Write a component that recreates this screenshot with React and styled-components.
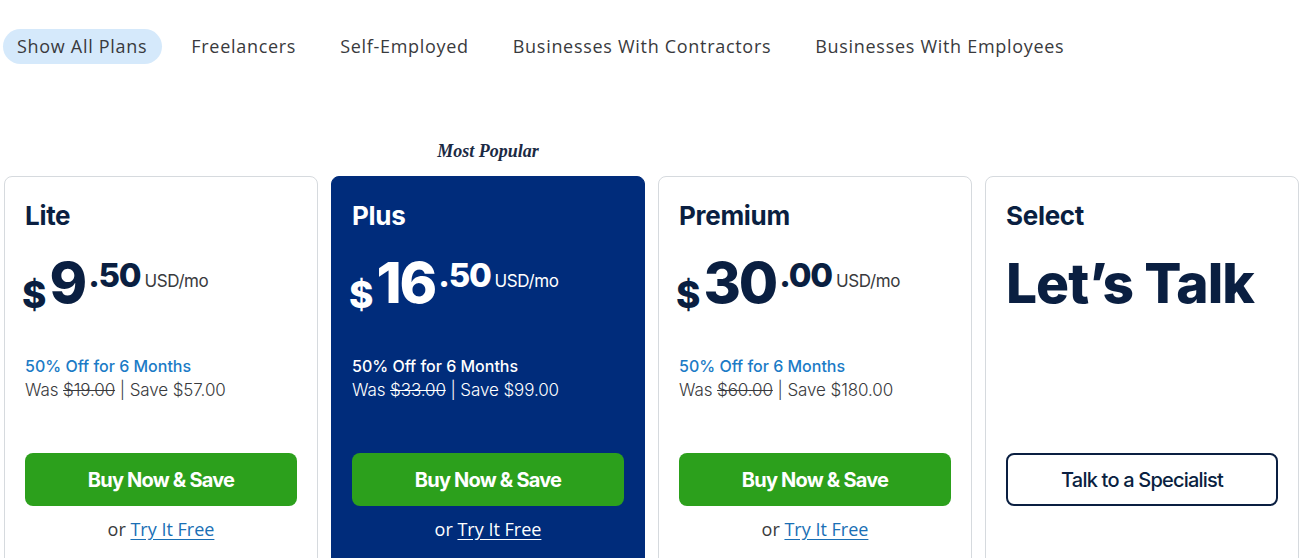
import React from 'react'
import styled, { createGlobalStyle } from 'styled-components'

const GlobalStyle = createGlobalStyle`
  body {
    margin: 0;
    background: #fff;
    font-family: Inter, "Noto Sans", sans-serif;
  }
`;

const Page = styled.div`
  padding: 29px 7px 0 3px;
`;

const Tabs = styled.div`
  display: flex;
  gap: 15px;
  align-items: center;
`;

const Tab = styled.button`
  border: none;
  background: ${p => (p.$active ? '#d5e9fb' : 'transparent')};
  border-radius: 18px;
  height: 35px;
  padding: 0 15px 1px 14px;
  font-family: "Open Sans", "Noto Sans", sans-serif;
  font-size: 18px;
  letter-spacing: 0.7px;
  color: #393a3d;
  cursor: pointer;
`;

const Grid = styled.div`
  display: grid;
  grid-template-columns: repeat(4, 314px);
  column-gap: 13px;
  margin-top: 77px;
  padding-left: 1px;
`;

const Slot = styled.div`
  display: flex;
  flex-direction: column;
`;

const Badge = styled.div`
  height: 35px;
  display: flex;
  align-items: center;
  justify-content: center;
  font-family: "Liberation Serif", "DejaVu Serif", serif;
  font-style: italic;
  font-weight: 700;
  font-size: 18px;
  color: #1b2a44;
  padding-bottom: 14px;
  box-sizing: border-box;
`;

const Card = styled.div`
  flex: 1;
  display: flex;
  flex-direction: column;
  border: 1px solid ${p => (p.$featured ? '#002c7b' : '#d6dade')};
  border-radius: 8px;
  background: ${p => (p.$featured ? '#002c7b' : '#fff')};
  color: ${p => (p.$featured ? '#fff' : '#0a1f41')};
  padding: 24px 20px 24px;
`;

const Title = styled.h2`
  margin: 0;
  font-size: 26px;
  line-height: 30px;
  font-weight: 700;
  letter-spacing: -0.3px;
`;

const PriceRow = styled.div`
  display: flex;
  align-items: flex-start;
  margin-top: 22px;
  margin-left: -3px;
  height: 60px;
`;

const Dollar = styled.span`
  font-size: 37px;
  line-height: 40px;
  font-weight: 800;
  margin-top: 22px;
  margin-right: 3px;
`;

const Whole = styled.span`
  font-size: 57px;
  line-height: 60px;
  font-weight: 800;
  letter-spacing: -2px;
`;

const Cents = styled.span`
  font-size: 33px;
  line-height: 32px;
  font-weight: 800;
  letter-spacing: -1.2px;
  margin-left: 3px;
  margin-top: 6px;
`;

const Unit = styled.span`
  font-size: 17px;
  font-weight: 400;
  margin-top: 18px;
  margin-left: 4px;
  letter-spacing: -0.4px;
  color: ${p => (p.$featured ? '#fff' : '#393a3d')};
`;

const Talk = styled.div`
  margin-top: 20px;
  font-size: 55px;
  line-height: 64px;
  font-weight: 800;
  letter-spacing: -1px;
`;

const Offer = styled.div`
  margin-top: 41px;
  font-size: 16px;
  line-height: 24px;
  font-weight: 500;
  color: ${p => (p.$featured ? '#fff' : '#1b7bc6')};
`;

const Was = styled.div`
  font-size: 17px;
  line-height: 24px;
  font-weight: 300;
  letter-spacing: -0.1px;
  color: ${p => (p.$featured ? '#fff' : '#393a3d')};

  s {
    text-decoration-thickness: 1px;
  }
`;

const Actions = styled.div`
  margin-top: ${p => (p.$bottom ? 'auto' : '51px')};
  display: flex;
  flex-direction: column;
  align-items: center;
`;

const BuyButton = styled.button`
  width: 100%;
  height: 53px;
  border: none;
  border-radius: 8px;
  background: #2ca01c;
  color: #fff;
  font-family: Inter, sans-serif;
  font-size: 20px;
  font-weight: 700;
  letter-spacing: -0.8px;
  cursor: pointer;
`;

const OutlineButton = styled(BuyButton)`
  background: #fff;
  color: #0a1f41;
  border: 2px solid #0a1f41;
  font-weight: 500;
`;

const TryLine = styled.div`
  margin-top: 11px;
  height: 24px;
  font-family: "Open Sans", "Noto Sans", sans-serif;
  font-size: 18px;
  line-height: 24px;
  color: ${p => (p.$featured ? '#fff' : '#393a3d')};
  visibility: ${p => (p.$ghost ? 'hidden' : 'visible')};

  a {
    color: ${p => (p.$featured ? '#fff' : '#1a6fb5')};
    text-decoration: underline;
    text-underline-offset: 3px;
  }
`;

const plans = [
  { name: 'Lite', whole: '9', cents: '.50', was: '$19.00', save: '$57.00' },
  { name: 'Plus', whole: '16', cents: '.50', was: '$33.00', save: '$99.00', featured: true },
  { name: 'Premium', whole: '30', cents: '.00', was: '$60.00', save: '$180.00' },
]

const tabs = ['Show All Plans', 'Freelancers', 'Self-Employed', 'Businesses With Contractors', 'Businesses With Employees']

const App = () => {
  return (
    <Page>
      <GlobalStyle />
      <Tabs>
        {tabs.map((t, i) => (
          <Tab key={t} $active={i === 0}>{t}</Tab>
        ))}
      </Tabs>

      <Grid>
        {plans.map(p => (
          <Slot key={p.name}>
            <Badge>{p.featured ? 'Most Popular' : ''}</Badge>
            <Card $featured={p.featured}>
              <Title>{p.name}</Title>
              <PriceRow>
                <Dollar>$</Dollar>
                <Whole>{p.whole}</Whole>
                <Cents>{p.cents}</Cents>
                <Unit $featured={p.featured}>USD/mo</Unit>
              </PriceRow>
              <Offer $featured={p.featured}>50% Off for 6 Months</Offer>
              <Was $featured={p.featured}>
                Was <s>{p.was}</s> | Save {p.save}
              </Was>
              <Actions>
                <BuyButton>Buy Now &amp; Save</BuyButton>
                <TryLine $featured={p.featured}>
                  or <a href="#">Try It Free</a>
                </TryLine>
              </Actions>
            </Card>
          </Slot>
        ))}
        <Slot>
          <Badge />
          <Card>
            <Title>Select</Title>
            <Talk>Let’s Talk</Talk>
            <Actions $bottom>
              <OutlineButton>Talk to a Specialist</OutlineButton>
              <TryLine $ghost>&nbsp;</TryLine>
            </Actions>
          </Card>
        </Slot>
      </Grid>
    </Page>
  )
}

export default App
